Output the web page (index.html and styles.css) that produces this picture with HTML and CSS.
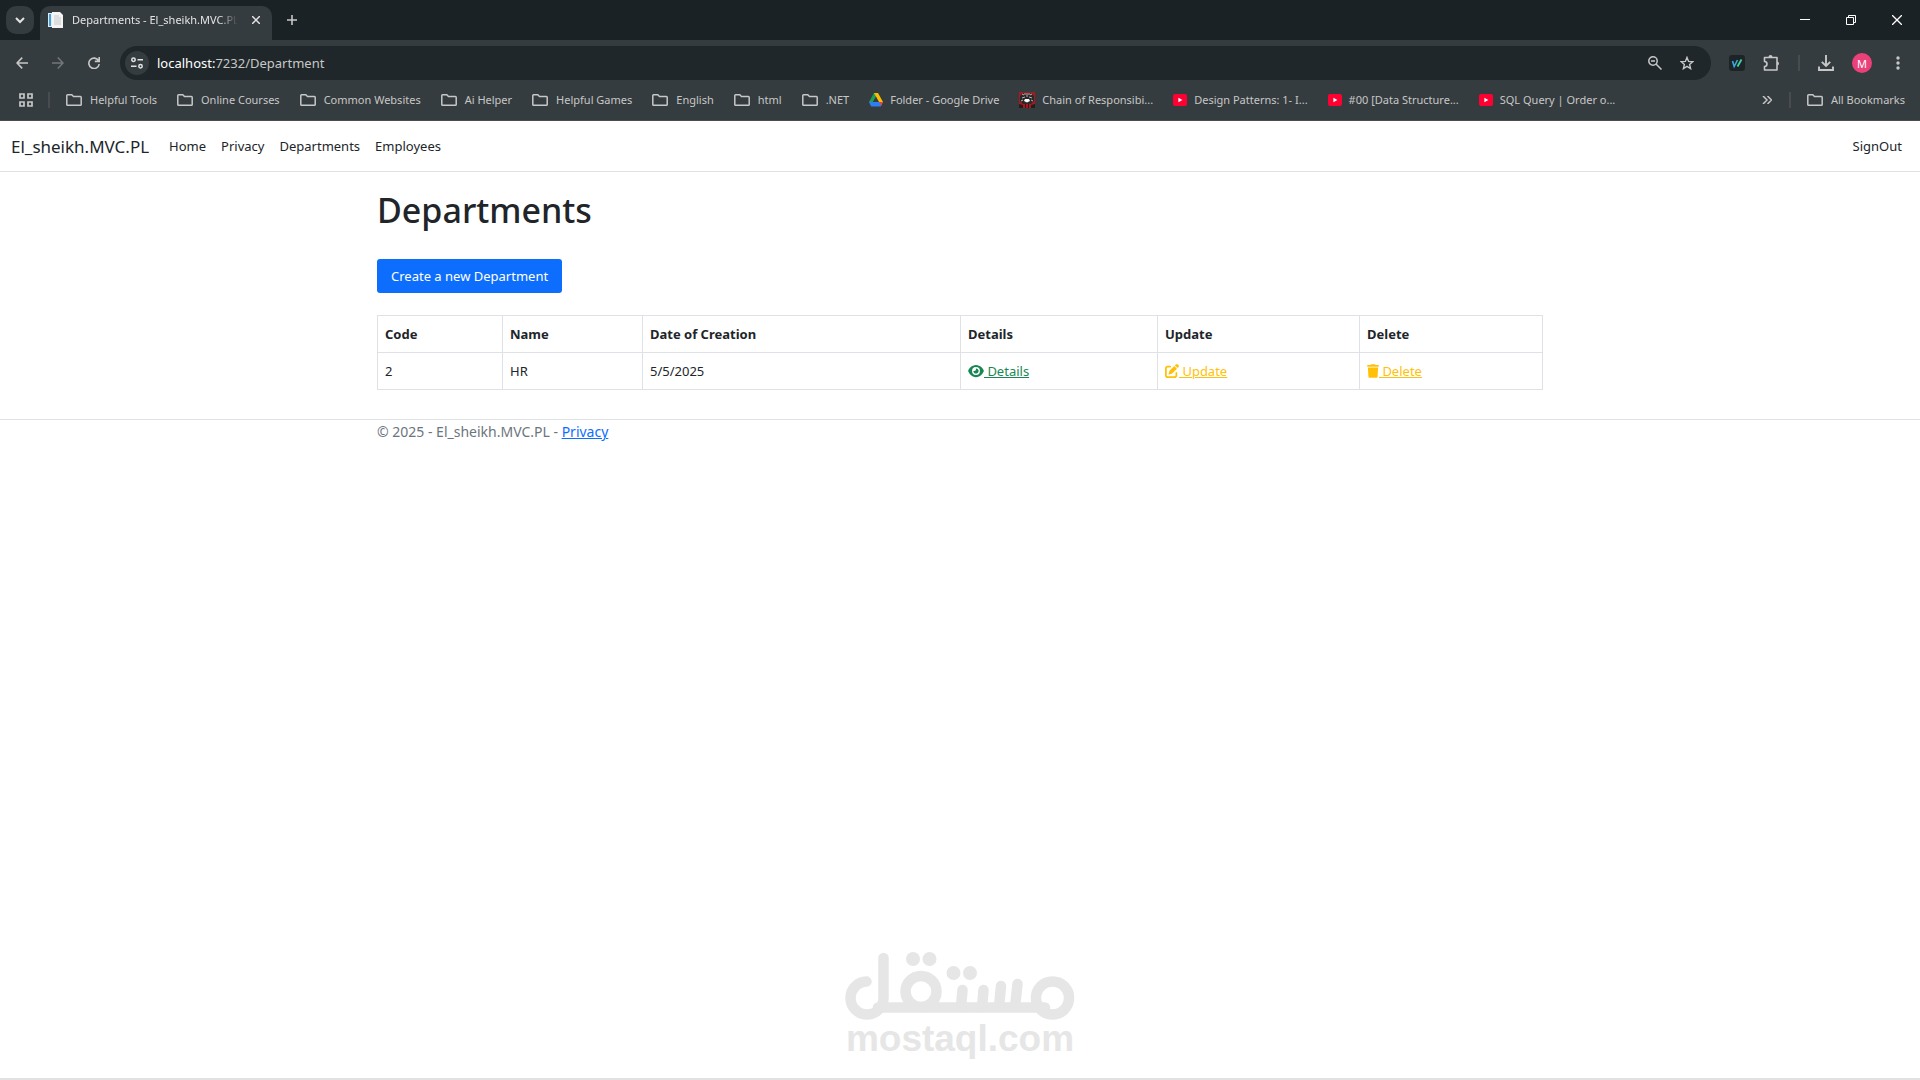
FILE: index.html
```html
<!DOCTYPE html>
<html lang="en">
<head>
    <meta charset="UTF-8">
    <meta name="viewport" content="width=device-width, initial-scale=1.0">
    <title>Departments - El_sheikh.MVC.PL</title>
    <link rel="stylesheet" href="styles.css">
</head>
<body>

<!-- icons used more than once -->
<svg class="sprite" aria-hidden="true">
    <symbol id="folder" viewBox="0 0 16 12">
        <path d="M1.6.8h4.2l1.7 1.7h6.9c.5 0 .8.3.8.8v7.1c0 .5-.3.8-.8.8H1.6c-.5 0-.8-.3-.8-.8V1.6c0-.5.3-.8.8-.8z" fill="none" stroke="#c7c7c7" stroke-width="1.5"/>
    </symbol>
    <symbol id="youtube" viewBox="0 0 14 12">
        <rect width="14" height="12" rx="2" fill="#ff0033"/>
        <path d="M5.4 3.8l4 2.2-4 2.2z" fill="#fff"/>
    </symbol>
</svg>

<div class="browser">
    <div class="tabstrip">
        <button class="tab-search" aria-label="Search tabs">
            <svg width="10" height="7" viewBox="0 0 10 7"><path d="M1 1l4 4 4-4" fill="none" stroke="#e3e3e3" stroke-width="2"/></svg>
        </button>
        <div class="tab">
            <svg width="16" height="16" viewBox="0 0 16 16">
                <path d="M0 1h4v14H0z" fill="#d9ecf7"/>
                <path d="M1 2h2v12H1z" fill="#4a9fd0"/>
                <path d="M4 0h8l3 3v13H4z" fill="#f4f4f4"/>
                <path d="M6 4h5M6 6h7M6 8h7M6 10h7M6 12h7" stroke="#c4c8ca" stroke-width="1"/>
            </svg>
            <span class="tab-title">Departments - El_sheikh.MVC.PL</span>
            <button class="plain" aria-label="Close tab">
                <svg width="8" height="8" viewBox="0 0 8 8"><path d="M0 0l8 8M8 0L0 8" stroke="#e3e3e3" stroke-width="1.5"/></svg>
            </button>
        </div>
        <button class="plain new-tab" aria-label="New tab">
            <svg width="10" height="10" viewBox="0 0 10 10"><path d="M5 0v10M0 5h10" stroke="#c7c7c7" stroke-width="1.6"/></svg>
        </button>
        <div class="window-buttons">
            <button class="plain" aria-label="Minimize"><svg width="10" height="10" viewBox="0 0 10 10"><path d="M0 4.5h10" stroke="#fff"/></svg></button>
            <button class="plain" aria-label="Restore"><svg width="10" height="10" viewBox="0 0 10 10"><path d="M.5 2.5h7v7h-7zM2.5 2.5v-2h7v7h-2" fill="none" stroke="#fff"/></svg></button>
            <button class="plain" aria-label="Close"><svg width="10" height="10" viewBox="0 0 10 10"><path d="M0 0l10 10M10 0L0 10" stroke="#fff" stroke-width="1.3"/></svg></button>
        </div>
    </div>

    <div class="toolbar">
        <div class="nav-buttons">
            <button class="plain" aria-label="Back"><svg width="12" height="12" viewBox="0 0 12 12"><path d="M6.2.6L1 6l5.2 5.4M1 6h11" fill="none" stroke="#c7c7c7" stroke-width="1.6"/></svg></button>
            <button class="plain" aria-label="Forward"><svg width="12" height="12" viewBox="0 0 12 12"><path d="M5.8.6L11 6l-5.2 5.4M11 6H0" fill="none" stroke="#737779" stroke-width="1.5"/></svg></button>
            <button class="plain" aria-label="Reload"><svg width="12" height="12" viewBox="0 0 12 12"><path d="M10.6 3.8A5.2 5.2 0 1 0 11.2 7M11.2 0v4.4H6.8" fill="none" stroke="#c7c7c7" stroke-width="1.6"/></svg></button>
        </div>
        <div class="omnibox">
            <button class="site-info" aria-label="View site information">
                <svg width="12" height="12" viewBox="0 0 12 12"><g fill="none" stroke="#e3e3e3" stroke-width="1.5"><circle cx="2.5" cy="2.7" r="1.7"/><path d="M6.5 2.7H12M0 9.3h5.5"/><circle cx="9.5" cy="9.3" r="1.7"/></g></svg>
            </button>
            <div class="url">localhost:<span>7232/Department</span></div>
            <button class="plain" aria-label="Zoom"><svg width="14" height="14" viewBox="0 0 14 14"><g fill="none" stroke="#c7c7c7" stroke-width="1.5"><circle cx="5" cy="5" r="4.2"/><path d="M8 8l5.5 5.5M3 5h4"/></g></svg></button>
            <button class="plain" aria-label="Bookmark this tab"><svg width="14" height="14" viewBox="0 0 14 14"><path d="M7 1.4l1.6 4 4.2.3-3.2 2.7 1 4.2L7 10.3l-3.6 2.3 1-4.2-3.2-2.7 4.2-.3z" fill="none" stroke="#c7c7c7" stroke-width="1.4"/></svg></button>
        </div>
        <div class="tools">
            <button class="plain" aria-label="Extension">
                <svg width="16" height="16" viewBox="0 0 16 16"><rect width="16" height="16" rx="3" fill="#1d2427"/><path d="M3.5 6l1.7 5.5L8.5 5" fill="none" stroke="#39a9e0" stroke-width="1.6"/><path d="M8.5 11.5L12.5 4.5" stroke="#46d39a" stroke-width="1.8"/></svg>
            </button>
            <button class="plain" aria-label="Extensions">
                <svg width="17" height="16" viewBox="0 0 17 16"><path d="M1.5 2.5H14V15H1.5v-3.5c3.3 0 3.3-5 0-5z" fill="none" stroke="#c7c7c7" stroke-width="1.6" stroke-linejoin="round"/><path d="M5.5 2a2 2 0 0 1 4 0zM14 6.5a2 2 0 0 1 0 4z" fill="#c7c7c7"/></svg>
            </button>
            <span class="divider"></span>
            <button class="plain" aria-label="Downloads">
                <svg width="16" height="16" viewBox="0 0 16 16"><path d="M8 0v11M3.8 6.8L8 11l4.2-4.2M1 11.5V15h14v-3.5" fill="none" stroke="#c7c7c7" stroke-width="1.9"/></svg>
            </button>
            <button class="avatar" aria-label="Profile">M</button>
            <button class="plain" aria-label="Menu">
                <svg width="4" height="14" viewBox="0 0 4 14" fill="#c7c7c7"><circle cx="2" cy="2" r="1.7"/><circle cx="2" cy="7" r="1.7"/><circle cx="2" cy="12" r="1.7"/></svg>
            </button>
        </div>
    </div>

    <div class="bookmarks">
        <button class="plain" aria-label="Apps">
            <svg width="14" height="14" viewBox="0 0 14 14"><path d="M1 1h4v4H1zM9 1h4v4H9zM1 9h4v4H1zM9 9h4v4H9z" fill="none" stroke="#c7c7c7" stroke-width="1.7"/></svg>
        </button>
        <span class="divider"></span>
        <nav class="bookmark-list">
            <a href="#"><svg width="16" height="12"><use href="#folder"/></svg>Helpful Tools</a>
            <a href="#"><svg width="16" height="12"><use href="#folder"/></svg>Online Courses</a>
            <a href="#"><svg width="16" height="12"><use href="#folder"/></svg>Common Websites</a>
            <a href="#"><svg width="16" height="12"><use href="#folder"/></svg>Ai Helper</a>
            <a href="#"><svg width="16" height="12"><use href="#folder"/></svg>Helpful Games</a>
            <a href="#"><svg width="16" height="12"><use href="#folder"/></svg>English</a>
            <a href="#"><svg width="16" height="12"><use href="#folder"/></svg>html</a>
            <a href="#"><svg width="16" height="12"><use href="#folder"/></svg>.NET</a>
            <a class="site" href="#">
                <svg width="14" height="14" viewBox="0 0 14 14"><path d="M5 0h4L4.5 7.8 2 12 0 9z" fill="#1e9e57"/><path d="M5 0h4l5 9h-4z" fill="#fbbc04"/><path d="M0 9h14l-2.2 4.5H2.2z" fill="#2f7df0"/><path d="M10.5 9H14l-2 4z" fill="#ea4335"/><path d="M7 4.5L9.5 9h-5z" fill="#353c3f"/></svg>Folder - Google Drive</a>
            <a class="site" href="#">
                <svg width="16" height="16" viewBox="0 0 16 16"><path d="M0 0h16v16H0z" fill="#a8181e"/><path d="M1 4l3-3h8l3 3v5l-3 3H4L1 9z" fill="#2b2829"/><path d="M3 2l2 1M13 2l-2 1M5 2h6M3 6l3-1M13 6l-3-1M2 9l2-1M14 9l-2-1M7 4h2" stroke="#b9b4b3"/><path d="M6 7h4l1 2-3 1.500-3-1.500z" fill="#fff"/><path d="M0 12l4 1v3H0zM16 12l-4 1v3h4zM6 12h1v4H6zM9 12h1v4H9z" fill="#241c1d"/></svg>Chain of Responsibi...</a>
            <a class="site" href="#"><svg width="14" height="12"><use href="#youtube"/></svg>Design Patterns: 1- I...</a>
            <a class="site" href="#"><svg width="14" height="12"><use href="#youtube"/></svg>#00 [Data Structure...</a>
            <a class="site" href="#"><svg width="14" height="12"><use href="#youtube"/></svg>SQL Query | Order o...</a>
        </nav>
        <button class="plain more" aria-label="More bookmarks">
            <svg width="10" height="8" viewBox="0 0 10 8"><path d="M1 0l4 4-4 4M5.5 0l4 4-4 4" fill="none" stroke="#c7c7c7" stroke-width="1.5"/></svg>
        </button>
        <span class="divider"></span>
        <a class="all" href="#"><svg width="16" height="12"><use href="#folder"/></svg>All Bookmarks</a>
    </div>
</div>

<header class="navbar">
    <a class="brand" href="#">El_sheikh.MVC.PL</a>
    <nav class="nav-links">
        <a href="#">Home</a>
        <a href="#">Privacy</a>
        <a href="#">Departments</a>
        <a href="#">Employees</a>
    </nav>
    <a class="signout" href="#">SignOut</a>
</header>

<main class="container">
    <h1>Departments</h1>
    <button class="btn-create">Create a new Department</button>
    <table>
        <colgroup>
            <col class="w-code"><col class="w-name"><col class="w-date"><col class="w-details"><col class="w-update"><col>
        </colgroup>
        <thead>
            <tr>
                <th>Code</th>
                <th>Name</th>
                <th>Date of Creation</th>
                <th>Details</th>
                <th>Update</th>
                <th>Delete</th>
            </tr>
        </thead>
        <tbody>
            <tr>
                <td>2</td>
                <td>HR</td>
                <td>5/5/2025</td>
                <td><a class="success" href="#"><svg width="16" height="14" viewBox="0 0 576 512"><path fill="currentColor" d="M288 32c-80.800 0-145.500 36.800-192.600 80.600C48.600 156 17.300 208 2.500 243.700c-3.300 7.900-3.300 16.700 0 24.600C17.300 304 48.600 356 95.400 399.400 142.500 443.200 207.200 480 288 480s145.500-36.800 192.600-80.600c46.800-43.500 78.100-95.400 93-131.100 3.300-7.900 3.300-16.700 0-24.600-14.900-35.700-46.200-87.700-93-131.100C433.500 68.800 368.800 32 288 32zM144 256a144 144 0 1 1 288 0 144 144 0 1 1-288 0zm144-64c0 35.300-28.700 64-64 64-7.100 0-13.900-1.200-20.300-3.300-5.500-1.800-11.900 1.600-11.700 7.400.3 6.900 1.300 13.800 3.200 20.700 13.700 51.200 66.400 81.600 117.600 67.900s81.600-66.400 67.900-117.600c-11.100-41.500-47.800-69.400-88.600-71.100-5.800-.2-9.200 6.100-7.400 11.700 2.100 6.400 3.300 13.200 3.300 20.300z"/></svg> Details</a></td>
                <td><a class="warning" href="#"><svg width="14" height="14" viewBox="0 0 512 512"><path fill="currentColor" d="M471.600 21.700c-21.900-21.900-57.300-21.900-79.200 0L362.300 51.700l97.900 97.900 30.100-30.100c21.900-21.900 21.900-57.300 0-79.200L471.600 21.700zm-299.200 220c-6.100 6.100-10.800 13.600-13.500 21.900l-29.600 88.800c-2.900 8.600-.6 18.100 5.800 24.600s15.900 8.700 24.600 5.800l88.800-29.600c8.200-2.700 15.700-7.400 21.900-13.500L437.700 172.300 339.700 74.300 172.400 241.700zM96 64C43 64 0 107 0 160v256c0 53 43 96 96 96h256c53 0 96-43 96-96v-96c0-17.700-14.300-32-32-32s-32 14.300-32 32v96c0 17.700-14.300 32-32 32H96c-17.700 0-32-14.300-32-32V160c0-17.700 14.300-32 32-32h96c17.700 0 32-14.300 32-32s-14.300-32-32-32H96z"/></svg> Update</a></td>
                <td><a class="warning" href="#"><svg width="12" height="14" viewBox="0 0 448 512"><path fill="currentColor" d="M135.200 17.700L128 32H32C14.300 32 0 46.300 0 64s14.300 32 32 32h384c17.700 0 32-14.300 32-32s-14.300-32-32-32h-96l-7.200-14.300C307.400 6.800 296.300 0 284.200 0H163.800c-12.100 0-23.200 6.800-28.600 17.700zM416 128H32l21.200 339c1.600 25.300 22.600 45 47.900 45h245.800c25.300 0 46.300-19.700 47.900-45L416 128z"/></svg> Delete</a></td>
            </tr>
        </tbody>
    </table>
</main>

<footer>
    <div class="container">&copy; 2025 - El_sheikh.MVC.PL - <a href="#">Privacy</a></div>
</footer>

<div class="watermark">
    <svg width="230" height="68" viewBox="0 0 230 68" role="img" aria-label="مستقل">
        <g fill="none" stroke="#e6e6e6" stroke-width="10.5" stroke-linecap="round">
            <path d="M21.5 29.5A16.5 16.5 0 1 0 38.5 46V6"/>
            <path d="M33 55.5H200"/>
            <circle cx="76" cy="39.5" r="15.5"/>
            <circle cx="207.5" cy="46" r="16.5"/>
            <path d="M116 55l1.5-17M137 55l1.5-17M154 55l2-21M170 55l2.5-23"/>
        </g>
        <g fill="#e6e6e6"><circle cx="68" cy="7" r="7"/><circle cx="84.5" cy="7" r="7"/><circle cx="108.5" cy="21" r="7"/><circle cx="125" cy="21" r="7"/></g>
    </svg>
    <span>mostaql.com</span>
</div>

</body>
</html>
```

FILE: styles.css
```css
* {
    box-sizing: border-box;
}
body {
    margin: 0;
    min-height: 100vh;
    display: flex;
    flex-direction: column;
    font-family: "Noto Sans", "Open Sans", sans-serif;
    font-size: 13px;
    line-height: 21px;
    color: #212529;
    background-color: #fff;
    border-bottom: 2px solid #e1e1e1;
}
button {
    font-family: inherit;
    border: none;
    cursor: pointer;
}
svg {
    flex: none;
}
.sprite {
    display: none;
}
.plain {
    display: flex;
    padding: 0;
    background: none;
}

/* browser window */
.browser {
    background-color: #353c3f;
    color: #e3e3e3;
    font-size: 11px;
    line-height: 16px;
    border-bottom: 1px solid #4a4d4e;
}
.tabstrip {
    display: flex;
    height: 40px;
    padding-left: 6px;
    background-color: #1b2225;
}
.tab-search {
    display: flex;
    align-items: center;
    justify-content: center;
    width: 28px;
    height: 28px;
    margin-top: 6px;
    border-radius: 10px;
    background-color: #353c3f;
}
.tab {
    display: flex;
    align-items: center;
    width: 232px;
    height: 34px;
    margin: 6px 0 0 6px;
    padding: 0 12px 6px 8px;
    border-radius: 10px 10px 0 0;
    background-color: #353c3f;
}
.tab-title {
    flex: 1;
    margin: 0 14px 0 8px;
    overflow: hidden;
    white-space: nowrap;
    mask-image: linear-gradient(to right, #000 88%, transparent);
}
.new-tab {
    align-items: center;
    margin-left: 15px;
}
.window-buttons {
    display: flex;
    gap: 36px;
    margin-left: auto;
    padding-right: 18px;
}
.window-buttons .plain {
    align-items: center;
}
.toolbar {
    display: flex;
    align-items: center;
    height: 46px;
    padding: 0 20px 0 16px;
}
.nav-buttons {
    display: flex;
    gap: 24px;
    margin-right: 20px;
}
.omnibox {
    flex: 1;
    display: flex;
    align-items: center;
    gap: 18px;
    height: 34px;
    padding: 0 17px 0 5px;
    border-radius: 17px;
    background-color: #1f272a;
}
.site-info {
    display: flex;
    align-items: center;
    justify-content: center;
    width: 24px;
    height: 24px;
    padding: 0;
    border-radius: 50%;
    background-color: #353c3f;
}
.url {
    flex: 1;
    margin-left: -10px;
    font-size: 13px;
    color: #fff;
}
.url span {
    color: #c7c7c7;
}
.tools {
    display: flex;
    align-items: center;
    gap: 18px;
    margin-left: 18px;
}
.divider {
    width: 2px;
    height: 16px;
    background-color: #484c4e;
}
.avatar {
    width: 20px;
    height: 20px;
    margin-right: 6px;
    padding: 0;
    border-radius: 50%;
    background-color: #ec407a;
    color: #fff;
    font-size: 11px;
}
.bookmarks {
    display: flex;
    align-items: center;
    height: 34px;
    padding: 0 15px 6px 19px;
}
.bookmarks .divider {
    margin: 0 16px 0 15px;
}
.bookmarks a {
    display: flex;
    align-items: center;
    gap: 8px;
    color: #c7c7c7;
    text-decoration: none;
    white-space: nowrap;
}
.bookmark-list {
    display: flex;
    gap: 20px;
}
.bookmarks .site {
    gap: 7px;
}
.more {
    margin: 0 2px 0 auto;
}

/* page */
.navbar {
    display: flex;
    align-items: center;
    height: 51px;
    padding: 0 18px 0 11px;
    border-bottom: 1px solid #dee2e6;
}
.navbar a {
    color: #212529;
    text-decoration: none;
}
.navbar .brand {
    margin-right: 20px;
    font-size: 17px;
}
.nav-links {
    display: flex;
    gap: 15px;
}
.signout {
    margin-left: auto;
}
.container {
    width: 100%;
    max-width: 1188px;
    margin: 0 auto;
    padding: 0 11px;
}
h1 {
    margin: 16px 0 27px;
    font-size: 34px;
    font-weight: 500;
    line-height: 44px;
}
.btn-create {
    display: block;
    height: 34px;
    margin-bottom: 22px;
    padding: 0 14px;
    border-radius: 3px;
    background-color: #0d6efd;
    color: #fff;
    font-size: 13px;
}
table {
    width: 100%;
    table-layout: fixed;
    border-collapse: collapse;
    margin-bottom: 29px;
}
th, td {
    height: 37px;
    padding: 7px;
    border: 1px solid #dee2e6;
    text-align: left;
}
.w-code {
    width: 125px;
}
.w-name {
    width: 140px;
}
.w-date {
    width: 318px;
}
.w-details {
    width: 197px;
}
.w-update {
    width: 202px;
}
td svg {
    vertical-align: -2px;
}
.success {
    color: #198754;
}
.warning {
    color: #ffc107;
}
footer {
    border-top: 1px solid #dee2e6;
    color: #6c757d;
    font-size: 14px;
    line-height: 23px;
}
footer a {
    color: #0d6efd;
}

.watermark {
    display: flex;
    flex-direction: column;
    align-items: center;
    margin-top: auto;
    padding-bottom: 21px;
    color: #e6e6e6;
    font-family: "Liberation Sans", Arial, sans-serif;
    font-size: 37px;
    font-weight: bold;
    line-height: 37px;
}
```
